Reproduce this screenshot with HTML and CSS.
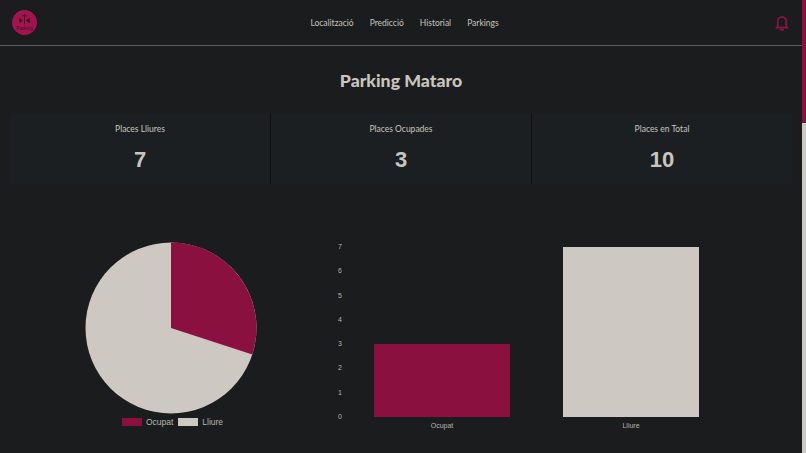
FILE: index.html
```html
<!DOCTYPE html>
<html lang="ca">
<head>
    <meta charset="UTF-8">
    <meta name="viewport" content="width=device-width, initial-scale=1.0">
    <title>Parking Mataro</title>
    <link rel="stylesheet" href="styles.css">
</head>
<body>

    <div class="page">
        <header class="navbar">
            <div class="logo">
                <svg width="25" height="25" viewBox="0 0 26 26">
                    <circle cx="13" cy="13" r="13" fill="#a3144e"/>
                    <path d="M13 4v11M10.5 6h5M8 9l3 2-3 2zM18 9l-3 2 3 2z" stroke="#3a1425" stroke-width="1" fill="#3a1425"/>
                    <text x="13" y="20.5" class="logo-text">Parking</text>
                </svg>
            </div>
            <nav class="menu">
                <a href="#">Localització</a>
                <a href="#">Predicció</a>
                <a href="#">Historial</a>
                <a href="#">Parkings</a>
            </nav>
            <div class="bell">
                <svg width="14" height="16" viewBox="0 0 16 18" fill="none" stroke="#8f1143" stroke-width="2">
                    <path d="M3.2 13V7.2a4.8 5.2 0 0 1 9.6 0V13l1.7 1.4H1.5z" stroke-linejoin="round"/>
                    <path d="M6.5 15.6a1.5 1.5 0 0 0 3 0" fill="#8f1143"/>
                </svg>
            </div>
        </header>

        <h1 class="title">Parking Mataro</h1>

        <section class="cards">
            <div class="card">
                <p class="card-label">Places Lliures</p>
                <p class="card-value">7</p>
            </div>
            <div class="card">
                <p class="card-label">Places Ocupades</p>
                <p class="card-value">3</p>
            </div>
            <div class="card">
                <p class="card-label">Places en Total</p>
                <p class="card-value">10</p>
            </div>
        </section>

        <section class="charts">
            <div class="pie-chart">
                <svg width="172" height="172" viewBox="0 0 172 172">
                    <circle cx="86" cy="86" r="85.5" fill="#cdc8c2"/>
                    <path d="M86 86V0.5A85.5 85.5 0 0 1 167.3 112.4z" fill="#8a1040"/>
                </svg>
                <div class="legend">
                    <span class="swatch swatch-red"></span><span class="legend-text">Ocupat</span>
                    <span class="swatch swatch-light"></span><span class="legend-text">Lliure</span>
                </div>
            </div>
            <div class="bar-chart">
                <div class="y-axis">
                    <span>7</span><span>6</span><span>5</span><span>4</span><span>3</span><span>2</span><span>1</span><span>0</span>
                </div>
                <div class="bars">
                    <div class="bar-col">
                        <div class="bar-area"><div class="bar bar-red" style="height: 73px"></div></div>
                        <span class="bar-label">Ocupat</span>
                    </div>
                    <div class="bar-col">
                        <div class="bar-area"><div class="bar bar-light" style="height: 170px"></div></div>
                        <span class="bar-label">Lliure</span>
                    </div>
                </div>
            </div>
        </section>
    </div>

    <div class="scrollbar"><div class="scroll-thumb"></div></div>

</body>
</html>
```

FILE: styles.css
```css
:root {
    --bg: #1a1c1e;
    --card: #1c1f21;
    --red: #8a1040;
    --light: #cdc8c2;
    --text: #c9c5bf;
}
* {
    box-sizing: border-box;
}
html, body {
    height: 100%;
}
body {
    margin: 0;
    background: var(--bg);
    color: var(--text);
    font-family: Lato, "Liberation Sans", sans-serif;
    display: flex;
    overflow: hidden;
}
.page {
    flex: 1;
    min-width: 0;
}
.navbar {
    height: 46px;
    border-bottom: 1px solid #5c5f5c;
    display: flex;
    align-items: center;
    justify-content: space-between;
    padding: 0 13px 0 12px;
}
.logo {
    display: flex;
    margin-top: -1px;
}
.logo-text {
    font-family: "Liberation Sans", sans-serif;
    font-size: 5px;
    fill: #3a1425;
    text-anchor: middle;
}
.menu {
    display: flex;
    gap: 16px;
    margin-right: 3px;
}
.menu a {
    color: var(--text);
    text-decoration: none;
    font-size: 8.5px;
}
.bell {
    display: flex;
}
.title {
    margin: 23px 0 20px;
    text-align: center;
    font-size: 17.7px;
    line-height: 24px;
    font-weight: 900;
}
.cards {
    margin: 0 10px;
    display: flex;
    height: 71px;
    background: var(--card);
}
.card {
    flex: 1;
    text-align: center;
    border-right: 1px solid #0e1012;
}
.card:last-child {
    border-right: none;
}
.card-label {
    margin: 10px 0 0;
    font-size: 8.5px;
    line-height: 13px;
}
.card-value {
    margin: 9px 0 0;
    font-family: "Liberation Sans", sans-serif;
    font-size: 22px;
    line-height: 30px;
    font-weight: 700;
}
.charts {
    display: flex;
    margin-top: 58px;
}
.pie-chart {
    width: 342px;
    display: flex;
    flex-direction: column;
    align-items: center;
}
.legend {
    display: flex;
    align-items: center;
    margin-top: 2px;
    margin-left: 3px;
    font-family: "Liberation Sans", sans-serif;
    font-size: 8.5px;
    color: #b9b5b0;
    line-height: 12px;
}
.swatch {
    width: 20px;
    height: 8px;
    margin-right: 4px;
}
.swatch-red {
    background: var(--red);
}
.swatch-light {
    background: var(--light);
}
.legend-text {
    margin-right: 5px;
}
.legend-text:last-child {
    margin-right: 0;
}
.bar-chart {
    display: flex;
    font-family: "Liberation Sans", sans-serif;
    font-size: 7px;
    color: #b9b5b0;
    margin-top: 5px;
}
.y-axis {
    width: 36px;
    height: 178px;
    margin-top: -4px;
    display: flex;
    flex-direction: column;
    justify-content: space-between;
    line-height: 8px;
    margin-left: -4px;
}
.bars {
    display: flex;
    gap: 53px;
}
.bar-col {
    width: 136px;
    display: flex;
    flex-direction: column;
    align-items: center;
}
.bar-area {
    height: 170px;
    width: 100%;
    display: flex;
    align-items: flex-end;
}
.bar {
    width: 100%;
}
.bar-red {
    background: var(--red);
}
.bar-light {
    background: var(--light);
}
.bar-label {
    margin-top: 5px;
    line-height: 8px;
}
.scrollbar {
    width: 4px;
    background: var(--light);
}
.scroll-thumb {
    height: 123px;
    background: var(--red);
}
```
